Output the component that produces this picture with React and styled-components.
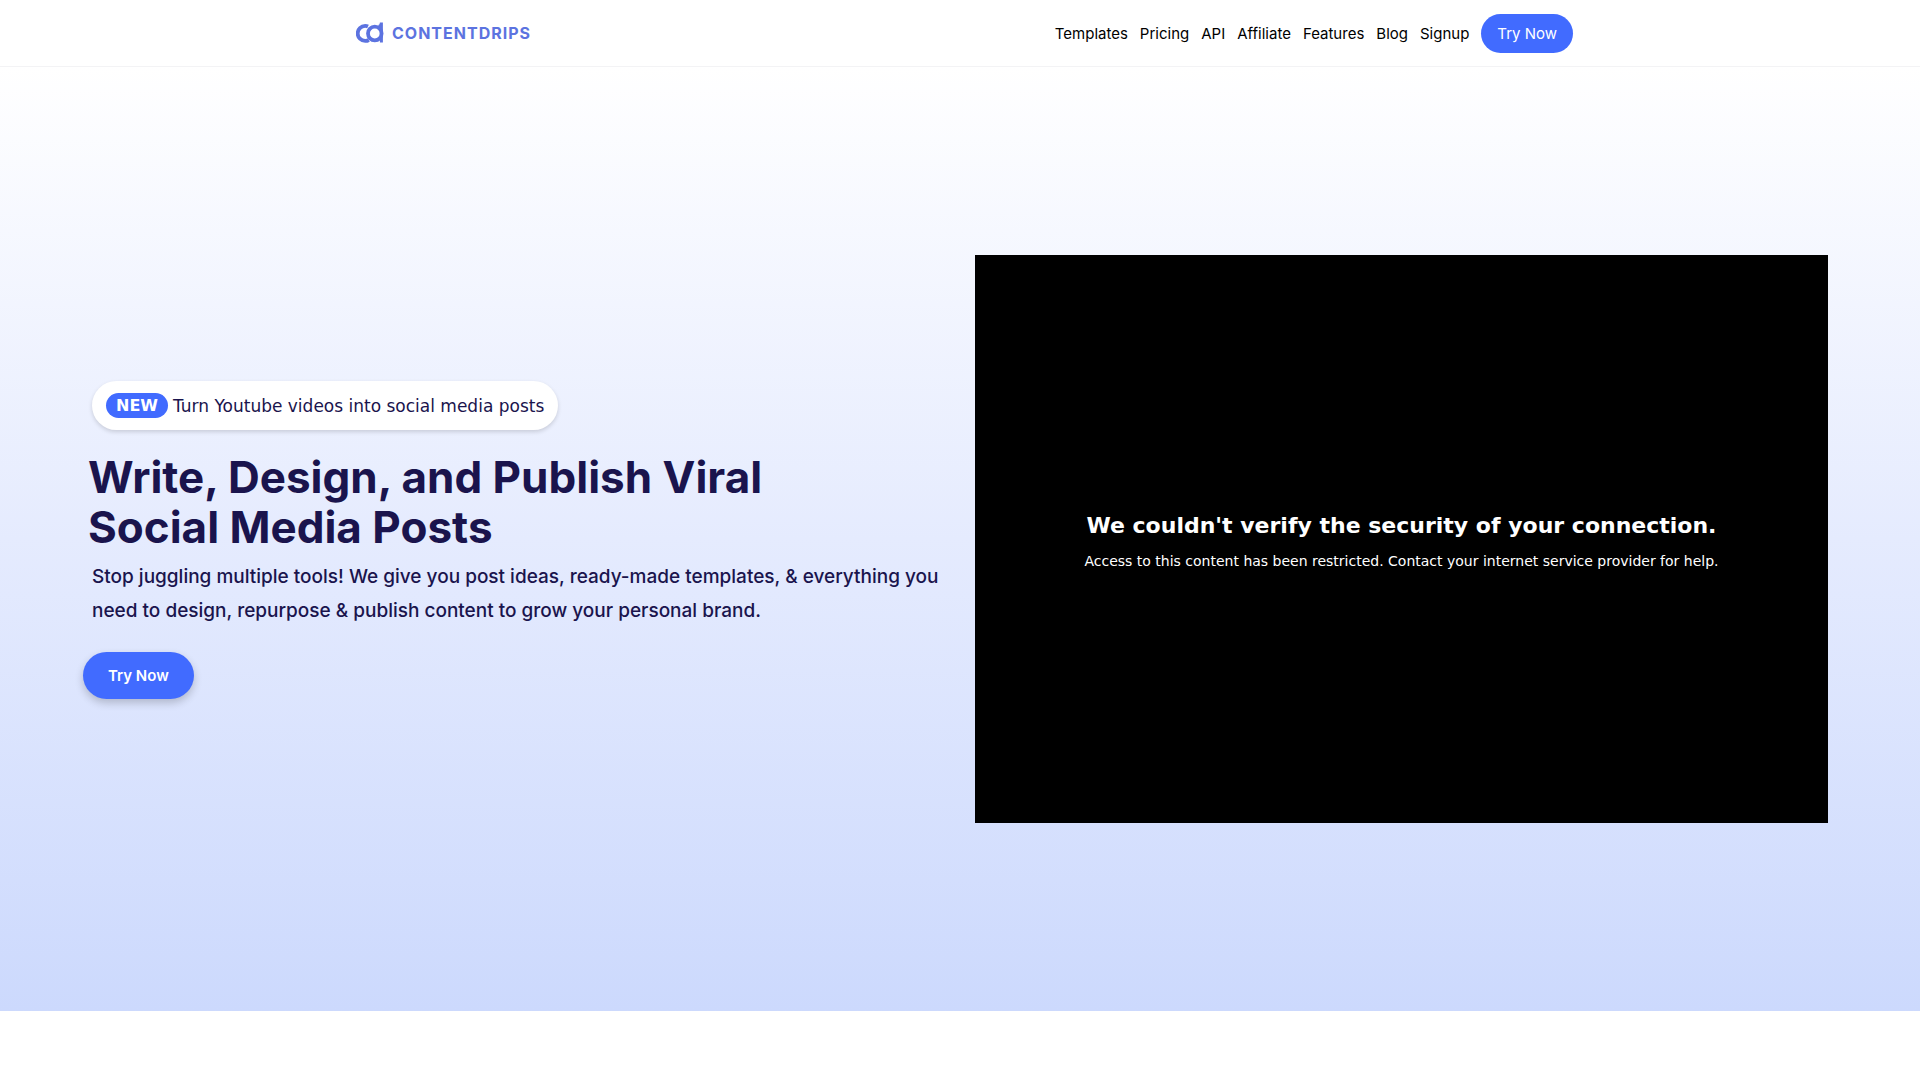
import React from 'react';
import styled, { createGlobalStyle } from 'styled-components';

const GlobalStyle = createGlobalStyle`
  * {
    box-sizing: border-box;
  }

  body {
    margin: 0;
    background: #fff;
    color: #000;
    font-family: Inter, sans-serif;
  }
`;

const HeaderWrapper = styled.header`
  background: #fff;
  border-bottom: 1px solid #f3f3f5;
`;

const Nav = styled.nav`
  display: flex;
  justify-content: space-between;
  align-items: center;
  max-width: 1236px;
  height: 66px;
  margin: 0 auto;
  padding: 0 5px 0 14px;
`;

const Logo = styled.a`
  display: flex;
  align-items: center;
  gap: 8px;
  color: #5c73e0;
  font-size: 16px;
  font-weight: 700;
  letter-spacing: 1px;
  text-decoration: none;
`;

const NavItems = styled.div`
  display: flex;
  align-items: center;
  gap: 12px;
`;

const NavLink = styled.a`
  color: #000;
  font-size: 15px;
  text-decoration: none;
`;

const NavButton = styled.button`
  height: 39px;
  padding: 0 16px;
  border: 0;
  border-radius: 20px;
  background: #416bff;
  color: #fff;
  font: 400 15px Inter, sans-serif;
`;

const Hero = styled.main`
  display: flex;
  align-items: center;
  min-height: 944px;
  padding: 0 80px;
  background: linear-gradient(180deg, #fff 0%, #e5ebfe 50%, #ccd9fd 100%);
`;

const Columns = styled.div`
  display: grid;
  grid-template-columns: 1fr 1fr;
  align-items: center;
  width: 100%;
`;

const Copy = styled.section`
  display: flex;
  flex-direction: column;
  align-items: flex-start;
  padding: 2px 12px 0;
`;

const Announcement = styled.a`
  display: flex;
  align-items: center;
  gap: 5px;
  height: 49px;
  padding: 0 14px;
  border-radius: 25px;
  background: #fff;
  box-shadow: 0 2px 4px rgba(0, 0, 0, 0.15);
  color: #1a144d;
  font-family: 'DejaVu Sans', sans-serif;
  font-size: 17px;
  text-decoration: none;
`;

const Badge = styled.span`
  padding: 0 10px;
  border-radius: 13px;
  background: #416bff;
  color: #fff;
  font-size: 16px;
  font-weight: 700;
  line-height: 25px;
`;

const Title = styled.h1`
  max-width: 700px;
  margin: 22px 0 0 -4px;
  color: #1a144d;
  font-size: 44px;
  font-weight: 700;
  line-height: 50px;
`;

const Description = styled.p`
  max-width: 850px;
  margin: 8px 0 0;
  color: #1a144d;
  font-size: 19px;
  font-weight: 500;
  line-height: 34px;
`;

const HeroButton = styled.button`
  height: 47px;
  margin: 24px 0 0 -9px;
  padding: 0 25px;
  border: 0;
  border-radius: 24px;
  background: #416bff;
  box-shadow: 0 4px 8px rgba(0, 0, 0, 0.2);
  color: #fff;
  font: 600 15px Inter, sans-serif;
`;

const Media = styled.section`
  padding: 0 12px 0 15px;
`;

const VideoFrame = styled.div`
  display: flex;
  flex-direction: column;
  align-items: center;
  justify-content: center;
  gap: 11px;
  aspect-ratio: 3 / 2;
  padding-top: 4px;
  background: #000;
  color: #fff;
  font-family: 'DejaVu Sans', sans-serif;
  text-align: center;
`;

const VideoTitle = styled.h2`
  margin: 0;
  font-size: 22px;
  font-weight: 700;
  line-height: 28px;
`;

const VideoText = styled.p`
  margin: 0;
  font-size: 14px;
  line-height: 20px;
`;

const links = ['Templates', 'Pricing', 'API', 'Affiliate', 'Features', 'Blog', 'Signup'];

const LogoMark = () => (
  <svg width="28" height="22" viewBox="0 0 28 22" fill="none" stroke="#5c73e0" strokeWidth="3.8" aria-hidden="true">
    <path d="M12 4.5C11.2 4.1 10.3 3.9 9.2 3.9A7.4 7.4 0 0 0 9.2 18.9C10.6 18.9 11.8 18.6 12.8 18" />
    <circle cx="18.8" cy="11.5" r="6.8" />
    <path d="M22.5 4.4C24.6 4.2 25.4 3 25.4 0.6V20.6" strokeWidth="3" />
  </svg>
);

const Header = () => (
  <HeaderWrapper>
    <Nav>
      <Logo href="#home">
        <LogoMark />
        CONTENTDRIPS
      </Logo>
      <NavItems>
        {links.map((link) => (
          <NavLink key={link} href={`#${link.toLowerCase()}`}>
            {link}
          </NavLink>
        ))}
        <NavButton type="button">Try Now</NavButton>
      </NavItems>
    </Nav>
  </HeaderWrapper>
);

const App = () => (
  <>
    <GlobalStyle />
    <Header />
    <Hero>
      <Columns>
        <Copy>
          <Announcement href="#youtube">
            <Badge>NEW</Badge>
            Turn Youtube videos into social media posts
          </Announcement>
          <Title>Write, Design, and Publish Viral Social Media Posts</Title>
          <Description>
            Stop juggling multiple tools! We give you post ideas, ready-made templates, &amp; everything you need to
            design, repurpose &amp; publish content to grow your personal brand.
          </Description>
          <HeroButton type="button">Try Now</HeroButton>
        </Copy>
        <Media>
          <VideoFrame>
            <VideoTitle>We couldn't verify the security of your connection.</VideoTitle>
            <VideoText>
              Access to this content has been restricted. Contact your internet service provider for help.
            </VideoText>
          </VideoFrame>
        </Media>
      </Columns>
    </Hero>
  </>
);

export default App;
